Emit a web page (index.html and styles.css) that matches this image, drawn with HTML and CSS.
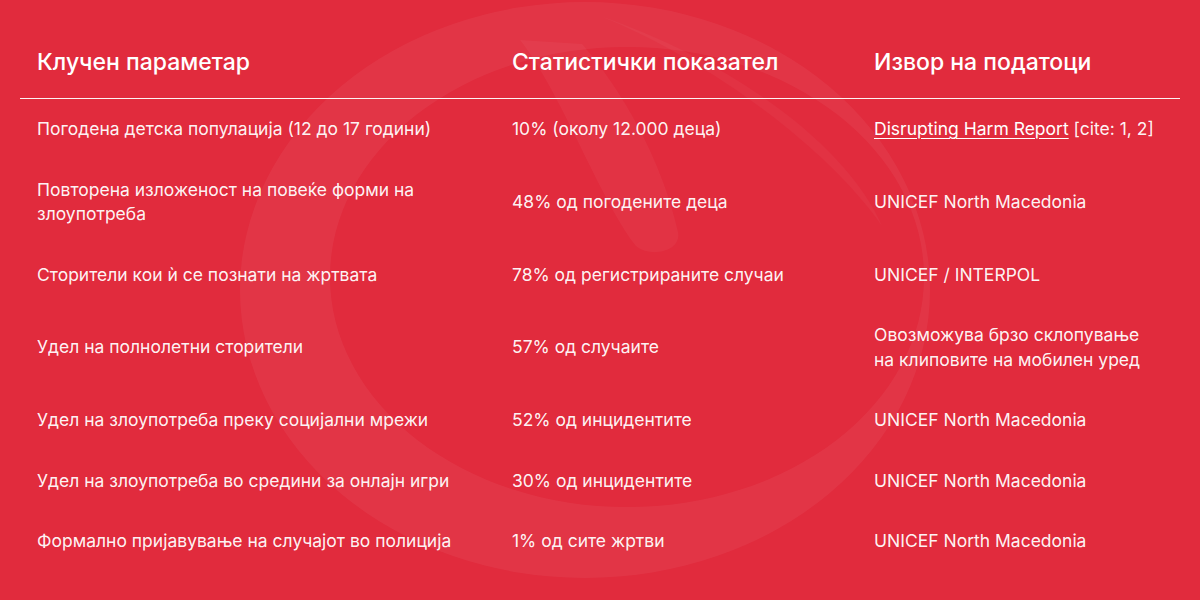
FILE: index.html
```html
<!DOCTYPE html>
<html lang="mk">
<head>
<meta charset="utf-8">
<title>Клучни параметри</title>
<link rel="stylesheet" href="styles.css">
</head>
<body>
<div class="page">
  <svg class="swirl" width="1200" height="600" viewBox="0 0 1200 600" aria-hidden="true">
    <path fill-rule="evenodd" class="ring" d="M240 290 A345 288 0 1 0 930 290 A345 288 0 1 0 240 290 Z M330 277 A297 230 0 1 0 924 277 A297 230 0 1 0 330 277 Z"/>
    <path class="blade" d="M520 40 C560 90 600 200 636 246 C650 258 682 252 678 232 C662 160 622 90 582 44 Z"/>
    <path class="tail" d="M600 16 C710 60 830 150 882 226 C850 150 740 64 600 16 Z"/>
  </svg>
  <table class="data">
    <colgroup>
      <col class="c1">
      <col class="c2">
      <col class="c3">
    </colgroup>
    <thead>
      <tr>
        <th>Клучен параметар</th>
        <th>Статистички показател</th>
        <th>Извор на податоци</th>
      </tr>
    </thead>
    <tbody>
      <tr>
        <td>Погодена детска популација (12 до 17 години)</td>
        <td>10% (околу 12.000 деца)</td>
        <td><a href="#" class="src-link">Disrupting Harm Report</a> [cite: 1, 2]</td>
      </tr>
      <tr>
        <td>Повторена изложеност на повеќе форми на злоупотреба</td>
        <td>48% од погодените деца</td>
        <td>UNICEF North Macedonia</td>
      </tr>
      <tr>
        <td>Сторители кои ѝ се познати на жртвата</td>
        <td>78% од регистрираните случаи</td>
        <td>UNICEF / INTERPOL</td>
      </tr>
      <tr>
        <td>Удел на полнолетни сторители</td>
        <td>57% од случаите</td>
        <td>Овозможува брзо склопување на клиповите на мобилен уред</td>
      </tr>
      <tr>
        <td>Удел на злоупотреба преку социјални мрежи</td>
        <td>52% од инцидентите</td>
        <td>UNICEF North Macedonia</td>
      </tr>
      <tr>
        <td>Удел на злоупотреба во средини за онлајн игри</td>
        <td>30% од инцидентите</td>
        <td>UNICEF North Macedonia</td>
      </tr>
      <tr>
        <td>Формално пријавување на случајот во полиција</td>
        <td>1% од сите жртви</td>
        <td>UNICEF North Macedonia</td>
      </tr>
    </tbody>
  </table>
</div>
</body>
</html>
```

FILE: styles.css
```css
html, body {
  margin: 0;
  padding: 0;
}

body {
  background: #e12b3d;
  font-family: Inter, "Noto Sans", "DejaVu Sans", sans-serif;
  color: #ffffff;
  width: 1200px;
  height: 600px;
  overflow: hidden;
}

.page {
  position: relative;
  width: 1200px;
  height: 600px;
  box-sizing: border-box;
  padding: 20px 20px;
}

.swirl {
  position: absolute;
  left: 0;
  top: 0;
  z-index: 0;
}

.ring {
  fill: rgba(255, 255, 255, 0.05);
}

.blade {
  fill: rgba(255, 255, 255, 0.04);
}

.tail {
  fill: rgba(255, 255, 255, 0.035);
}

.data {
  position: relative;
  z-index: 1;
  width: 1160px;
  border-collapse: collapse;
  table-layout: fixed;
}

.c1 { width: 475px; }
.c2 { width: 362px; }
.c3 { width: 323px; }

.data th {
  text-align: left;
  font-size: 23px;
  font-weight: 500;
  line-height: 28px;
  padding: 28px 17px 22px 17px;
  border-bottom: 1px solid rgba(255, 255, 255, 0.75);
  color: #ffffff;
}

.data td {
  font-size: 17.5px;
  font-weight: 400;
  line-height: 24.5px;
  padding: 18px 20px 18px 17px;
  vertical-align: middle;
  color: rgba(255, 255, 255, 0.96);
}

.src-link {
  color: #ffffff;
  text-decoration: underline;
  text-underline-offset: 3px;
  text-decoration-thickness: 1px;
}
```
